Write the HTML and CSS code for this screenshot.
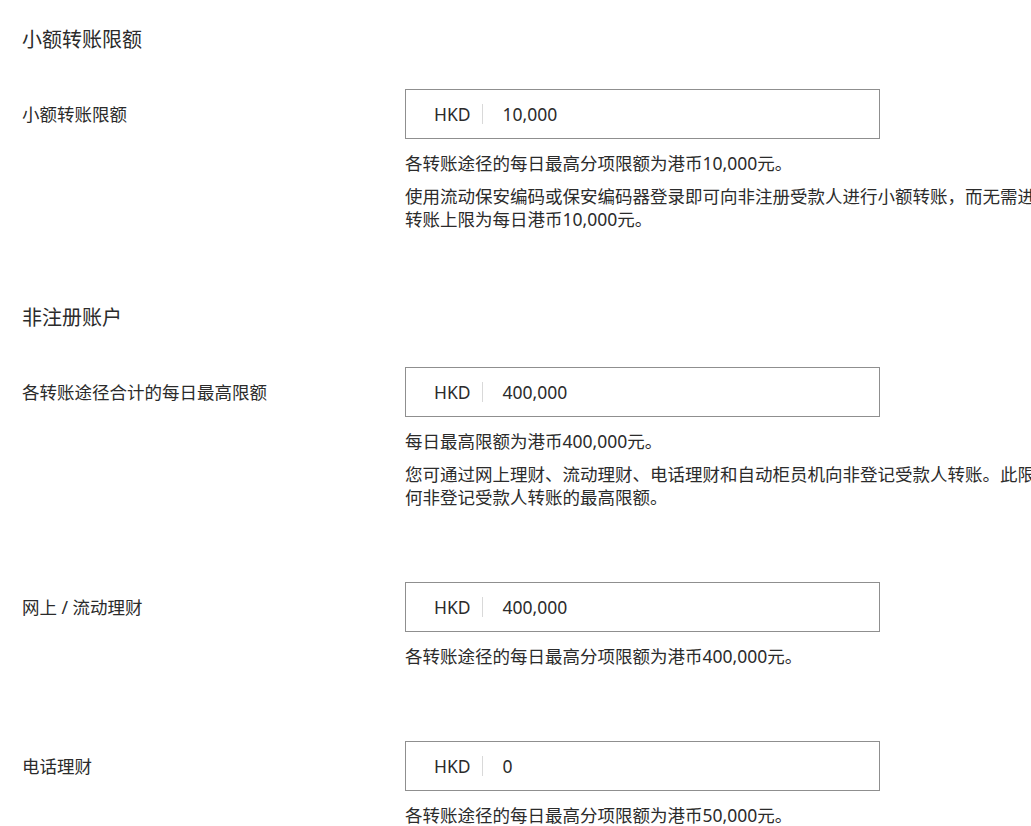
FILE: index.html
```html
<!DOCTYPE html>
<html lang="zh-CN">
<head>
    <meta charset="UTF-8">
    <meta name="viewport" content="width=device-width, initial-scale=1.0">
    <title>转账限额</title>
    <link rel="stylesheet" href="styles.css">
</head>
<body>
    <div class="page">
        <h2 class="section-title">小额转账限额</h2>

        <div class="limit-row">
            <div class="limit-label">小额转账限额</div>
            <div class="limit-field">
                <div class="amount-box">
                    <span class="currency">HKD</span>
                    <span class="amount">10,000</span>
                </div>
                <p class="hint">各转账途径的每日最高分项限额为港币10,000元。</p>
                <p class="note">使用流动保安编码或保安编码器登录即可向非注册受款人进行小额转账，而无需进行额外认证。小额转账上限为每日港币10,000元。</p>
            </div>
        </div>

        <h2 class="section-title">非注册账户</h2>

        <div class="limit-row">
            <div class="limit-label">各转账途径合计的每日最高限额</div>
            <div class="limit-field">
                <div class="amount-box">
                    <span class="currency">HKD</span>
                    <span class="amount">400,000</span>
                </div>
                <p class="hint">每日最高限额为港币400,000元。</p>
                <p class="note">您可通过网上理财、流动理财、电话理财和自动柜员机向非登记受款人转账。此限额为您每日可向任何非登记受款人转账的最高限额。</p>
            </div>
        </div>

        <div class="limit-row">
            <div class="limit-label">网上 / 流动理财</div>
            <div class="limit-field">
                <div class="amount-box">
                    <span class="currency">HKD</span>
                    <span class="amount">400,000</span>
                </div>
                <p class="hint">各转账途径的每日最高分项限额为港币400,000元。</p>
            </div>
        </div>

        <div class="limit-row">
            <div class="limit-label">电话理财</div>
            <div class="limit-field">
                <div class="amount-box">
                    <span class="currency">HKD</span>
                    <span class="amount">0</span>
                </div>
                <p class="hint">各转账途径的每日最高分项限额为港币50,000元。</p>
            </div>
        </div>
    </div>
</body>
</html>
```

FILE: styles.css
```css
:root {
    --text-color: #2b2b2b;
    --border-color: #8f8f8f;
    --divider-color: #d9d9d9;
}

* {
    margin: 0;
    padding: 0;
    box-sizing: border-box;
    font-family: 'Noto Sans', 'Noto Sans CJK SC', sans-serif;
}

html, body {
    overflow: hidden;
}

body {
    background-color: #ffffff;
    color: var(--text-color);
    font-size: 17.5px;
    line-height: 23px;
}

.page {
    padding: 26px 0 0 22px;
}

.section-title {
    font-size: 20px;
    font-weight: normal;
    line-height: 28px;
    margin-bottom: 35px;
}

.limit-row {
    display: grid;
    grid-template-columns: 383px 772px;
    margin-bottom: 73px;
}

.limit-label {
    line-height: 50px;
}

.amount-box {
    display: flex;
    align-items: center;
    width: 475px;
    height: 50px;
    border: 1px solid var(--border-color);
    padding-left: 28px;
}

.currency {
    padding-right: 11px;
    border-right: 1px solid var(--divider-color);
    line-height: 20px;
}

.amount {
    padding-left: 20px;
}

.hint {
    margin-top: 13px;
}

.note {
    margin-top: 10px;
}
```
